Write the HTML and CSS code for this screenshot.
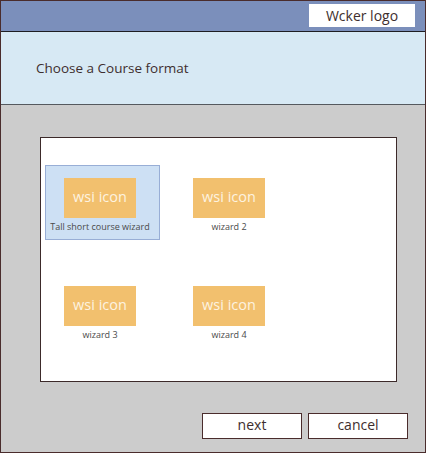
FILE: index.html
```html
<!DOCTYPE html>
<html lang="en">
<head>
    <meta charset="UTF-8">
    <title>Choose a Course format</title>
    <link rel="stylesheet" href="styles.css">
</head>
<body>
<div class="page">
    <div class="top">
        <div class="logo">Wcker logo</div>
    </div>
    <div class="title">Choose a Course format</div>
    <div class="content">
        <div class="panel">
            <div class="wizards">
                <div class="wizard on">
                    <div class="icon">wsi icon</div>
                    <div class="label">Tall short course wizard</div>
                </div>
                <div class="wizard">
                    <div class="icon">wsi icon</div>
                    <div class="label">wizard 2</div>
                </div>
                <div class="wizard">
                    <div class="icon">wsi icon</div>
                    <div class="label">wizard 3</div>
                </div>
                <div class="wizard">
                    <div class="icon">wsi icon</div>
                    <div class="label">wizard 4</div>
                </div>
            </div>
        </div>
        <div class="buttons">
            <div class="btn">next</div>
            <div class="btn">cancel</div>
        </div>
    </div>
</div>
</body>
</html>
```

FILE: styles.css
```css
*{
    margin: 0;
    padding: 0;
    box-sizing: border-box;
}
body{
    font-family: "Open Sans", "Noto Sans", sans-serif;
    color: #3e2e2e;
}
.page{
    width: 426px;
    height: 453px;
    border: 1px solid #4a2c2c;
    display: flex;
    flex-direction: column;
    background: #cccccc;
}
.top{
    height: 31px;
    background: #7b8fbb;
    border-bottom: 1px solid #1e1e22;
    display: flex;
    justify-content: flex-end;
    padding: 3px 10px 0 0;
}
.logo{
    width: 106px;
    height: 23px;
    background: #fff;
    text-align: center;
    font-size: 14px;
    line-height: 23px;
}
.title{
    height: 73px;
    background: #d7e9f4;
    border-bottom: 1px solid #55595e;
    padding: 27px 0 0 35px;
    font-size: 13.5px;
}
.content{
    flex: 1;
    padding: 32px 17px 0 39px;
}
.panel{
    width: 357px;
    height: 245px;
    background: #fff;
    border: 1px solid #3c2a2a;
    padding: 27px 0 0 4px;
}
.wizards{
    display: grid;
    grid-template-columns: 115px 115px;
    column-gap: 14px;
    row-gap: 33px;
}
/* content sits a little left of the card's middle */
.wizard{
    height: 75px;
    border: 1px solid transparent;
    padding: 12px 5px 0 0;
    display: flex;
    flex-direction: column;
    align-items: center;
}
.wizard.on{
    background: #cde0f4;
    border-color: #98aed6;
}
.icon{
    width: 72px;
    height: 40px;
    background: #f2c06e;
    color: #fdf3e0;
    font-size: 14.5px;
    line-height: 38px;
    text-align: center;
}
.label{
    margin-top: 3px;
    font-size: 9px;
    line-height: 12px;
    color: #4a4a4a;
}
.buttons{
    display: flex;
    justify-content: flex-end;
    gap: 6px;
    margin-top: 31px;
}
.btn{
    width: 100px;
    height: 26px;
    background: #fff;
    border: 1px solid #4a2c2c;
    text-align: center;
    font-size: 14px;
    line-height: 22px;
}
```
